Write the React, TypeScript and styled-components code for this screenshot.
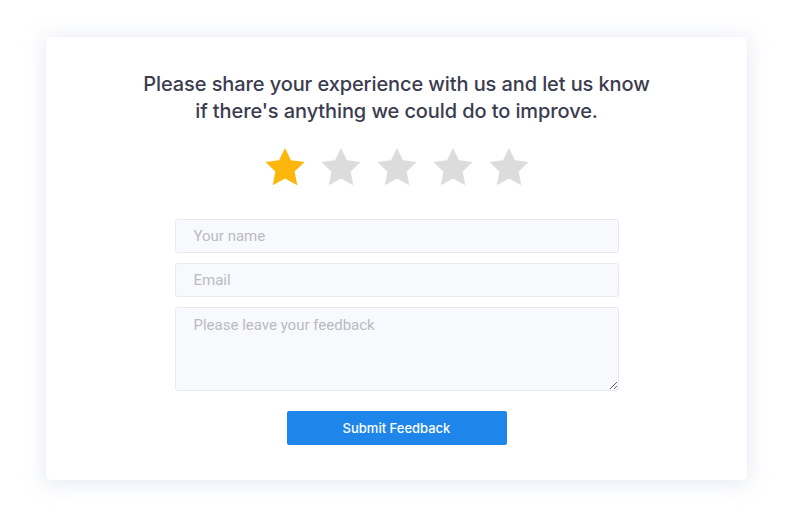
import React from "react";
import styled, { createGlobalStyle } from "styled-components";

const Global = createGlobalStyle`
  html, body { margin: 0; padding: 0; background: #ffffff; }
  body { font-family: Inter, "Noto Sans", Roboto, sans-serif; }
  * { box-sizing: border-box; }
`;

const Page = styled.div`
  width: 791px;
  height: 527px;
  padding: 37px 44px 0 46px;
`;

const Card = styled.div`
  width: 701px;
  height: 443px;
  background: #ffffff;
  border-radius: 5px;
  box-shadow: 0 2px 18px 4px rgba(200, 205, 230, 0.35);
  display: flex;
  flex-direction: column;
  align-items: center;
  padding-top: 34px;
`;

const Title = styled.h1`
  margin: 0;
  font-family: Inter, "Noto Sans", sans-serif;
  font-size: 20px;
  line-height: 27px;
  font-weight: 500;
  color: #3b3c50;
  text-align: center;
  letter-spacing: -0.1px;
`;

const Stars = styled.div`
  display: flex;
  gap: 14px;
  margin-top: 21px;
`;

const StarIcon = styled.svg<{ $on: boolean }>`
  width: 42px;
  height: 42px;
  fill: ${(p) => (p.$on ? "#fdb60b" : "#dcdcdc")};
  display: block;
`;

const Form = styled.form`
  display: flex;
  flex-direction: column;
  gap: 10px;
  margin-top: 31px;
  width: 444px;
  align-items: center;
`;

const fieldCss = `
  width: 444px;
  background: #f8f9fd;
  border: 1px solid #e7e9f1;
  border-radius: 3px;
  padding: 0 18px;
  font-family: Roboto, "Noto Sans", sans-serif;
  font-size: 15px;
  color: #333;
  outline: none;
  &::placeholder { color: #b9bbc4; }
`;

const Input = styled.input`
  ${fieldCss}
  height: 34px;
`;

const TextArea = styled.textarea`
  ${fieldCss}
  height: 84px;
  padding-top: 8px;
  resize: vertical;
  line-height: 18px;
`;

const Button = styled.button`
  margin-top: 10px;
  width: 220px;
  height: 34px;
  background: #1e86ea;
  border: none;
  border-radius: 2px;
  color: #ffffff;
  font-family: Inter, "Noto Sans", sans-serif;
  font-size: 13px;
  font-weight: 500;
  cursor: pointer;
`;

const Star = ({ on }: { on: boolean }) => (
  <StarIcon $on={on} viewBox="0 0 24 24">
    <path d="M12 1.2l3.4 7 7.8 1-5.7 5.4 1.5 7.8L12 18.6l-7 3.8 1.5-7.8L.8 9.2l7.8-1z" />
  </StarIcon>
);

export default function App() {
  return (
    <>
      <Global />
      <Page>
        <Card>
          <Title>
            Please share your experience with us and let us know
            <br />
            if there's anything we could do to improve.
          </Title>
          <Stars>
            {[0, 1, 2, 3, 4].map((i) => (
              <Star key={i} on={i === 0} />
            ))}
          </Stars>
          <Form onSubmit={(e) => e.preventDefault()}>
            <Input placeholder="Your name" />
            <Input placeholder="Email" />
            <TextArea placeholder="Please leave your feedback" />
            <Button type="submit">Submit Feedback</Button>
          </Form>
        </Card>
      </Page>
    </>
  );
}
